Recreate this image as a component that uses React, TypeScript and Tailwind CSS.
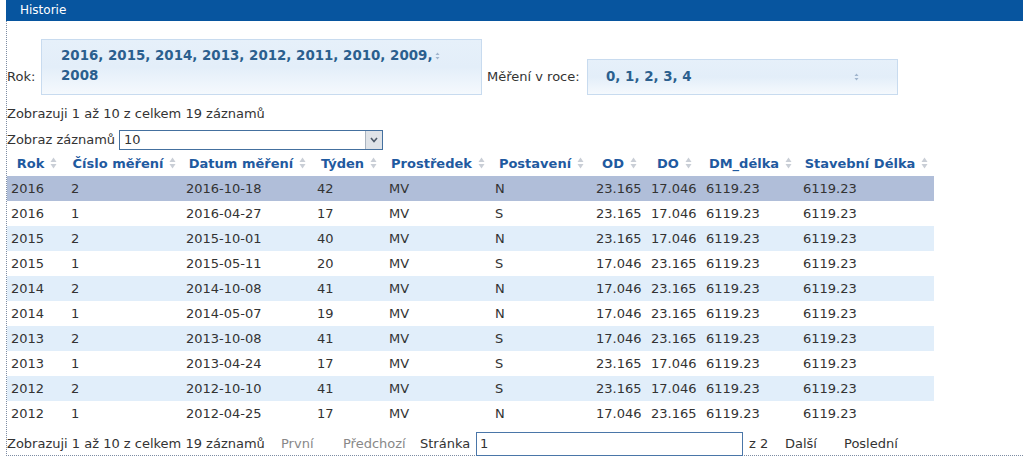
import React from 'react';

type Row = {
  rok: string;
  cislo: string;
  datum: string;
  tyden: string;
  prostredek: string;
  postaveni: string;
  od: string;
  do: string;
  dm: string;
  stavebni: string;
};

const ROWS: Row[] = [
  { rok: '2016', cislo: '2', datum: '2016-10-18', tyden: '42', prostredek: 'MV', postaveni: 'N', od: '23.165', do: '17.046', dm: '6119.23', stavebni: '6119.23' },
  { rok: '2016', cislo: '1', datum: '2016-04-27', tyden: '17', prostredek: 'MV', postaveni: 'S', od: '23.165', do: '17.046', dm: '6119.23', stavebni: '6119.23' },
  { rok: '2015', cislo: '2', datum: '2015-10-01', tyden: '40', prostredek: 'MV', postaveni: 'N', od: '23.165', do: '17.046', dm: '6119.23', stavebni: '6119.23' },
  { rok: '2015', cislo: '1', datum: '2015-05-11', tyden: '20', prostredek: 'MV', postaveni: 'S', od: '17.046', do: '23.165', dm: '6119.23', stavebni: '6119.23' },
  { rok: '2014', cislo: '2', datum: '2014-10-08', tyden: '41', prostredek: 'MV', postaveni: 'N', od: '17.046', do: '23.165', dm: '6119.23', stavebni: '6119.23' },
  { rok: '2014', cislo: '1', datum: '2014-05-07', tyden: '19', prostredek: 'MV', postaveni: 'N', od: '17.046', do: '23.165', dm: '6119.23', stavebni: '6119.23' },
  { rok: '2013', cislo: '2', datum: '2013-10-08', tyden: '41', prostredek: 'MV', postaveni: 'S', od: '17.046', do: '23.165', dm: '6119.23', stavebni: '6119.23' },
  { rok: '2013', cislo: '1', datum: '2013-04-24', tyden: '17', prostredek: 'MV', postaveni: 'S', od: '23.165', do: '17.046', dm: '6119.23', stavebni: '6119.23' },
  { rok: '2012', cislo: '2', datum: '2012-10-10', tyden: '41', prostredek: 'MV', postaveni: 'S', od: '23.165', do: '17.046', dm: '6119.23', stavebni: '6119.23' },
  { rok: '2012', cislo: '1', datum: '2012-04-25', tyden: '17', prostredek: 'MV', postaveni: 'N', od: '17.046', do: '23.165', dm: '6119.23', stavebni: '6119.23' },
];

const COLUMNS: { label: string; width: number; key: keyof Row }[] = [
  { label: 'Rok', width: 60, key: 'rok' },
  { label: 'Číslo měření', width: 115, key: 'cislo' },
  { label: 'Datum měření', width: 131, key: 'datum' },
  { label: 'Týden', width: 72, key: 'tyden' },
  { label: 'Prostředek', width: 106, key: 'prostredek' },
  { label: 'Postavení', width: 101, key: 'postaveni' },
  { label: 'OD', width: 55, key: 'od' },
  { label: 'DO', width: 55, key: 'do' },
  { label: 'DM_délka', width: 97, key: 'dm' },
  { label: 'Stavební Délka', width: 135, key: 'stavebni' },
];

const SortIcon = () => (
  <svg width="7" height="12" viewBox="0 0 7 12" className="inline-block ml-[6px] align-[-1px]">
    <path d="M3.5 0.5 L6.5 5 L0.5 5 Z" fill="#c9ced6" />
    <path d="M3.5 11.5 L6.5 7 L0.5 7 Z" fill="#c9ced6" />
  </svg>
);

const MultiArrow = () => (
  <svg width="5" height="8" viewBox="0 0 5 8">
    <path d="M2.5 0.5 L4.5 3 L0.5 3 Z" fill="#9fb4cc" />
    <path d="M2.5 7.5 L4.5 5 L0.5 5 Z" fill="#9fb4cc" />
  </svg>
);

export default function App() {
  return (
    <div className="w-[1023px] h-[469px] bg-white pl-[6px] font-['DejaVu_Sans',Verdana,sans-serif] text-[13px] text-[#333] overflow-hidden">
      <div className="h-[21px] bg-[#07559f] text-white text-[12px] pl-[14px] leading-[21px]">Historie</div>
      <div className="h-[435px] border-l border-b border-dotted border-[#7d8ca3] flex flex-col">
        {/* filters */}
        <div className="flex items-end mt-[18px]">
          <div className="h-[36px] flex items-center w-[34px]">Rok:</div>
          <div className="w-[441px] h-[56px] border border-[#c8dbef] bg-gradient-to-b from-[#e6f0fa] via-[#e3eef9] to-[#f5f9fd] flex items-start pl-[19px] pt-[6px] font-bold text-[13.4px] leading-[20px] text-[#2b5f8e]">
            <div className="w-[374px] whitespace-nowrap">
              2016, 2015, 2014, 2013, 2012, 2011, 2010, 2009,
              <br />
              2008
            </div>
            <div className="mt-[6px]">
              <MultiArrow />
            </div>
          </div>
          <div className="h-[36px] flex items-center ml-[5px] w-[100px]">Měření v roce:</div>
          <div className="w-[311px] h-[36px] border border-[#c8dbef] bg-gradient-to-b from-[#e6f0fa] via-[#e3eef9] to-[#f5f9fd] flex items-center pl-[18px] font-bold text-[13.4px] text-[#2b5f8e]">
            <div className="w-[248px]">0, 1, 2, 3, 4</div>
            <MultiArrow />
          </div>
        </div>

        <div className="mt-[11px] leading-[16px]">Zobrazuji 1 až 10 z celkem 19 záznamů</div>

        <div className="flex items-center mt-[8px] h-[20px]">
          <span className="w-[112px]">Zobraz záznamů</span>
          <div className="w-[264px] h-[20px] border border-[#44709f] flex items-center bg-white">
            <span className="flex-1 pl-[4px]">10</span>
            <div className="w-[17px] h-full bg-[#dfe3e8] border-l border-[#aab4c0] flex items-center justify-center">
              <svg width="8" height="6" viewBox="0 0 8 6">
                <path d="M1 1 L4 4.5 L7 1" stroke="#4d5a6a" strokeWidth="1.6" fill="none" />
              </svg>
            </div>
          </div>
        </div>

        <table className="table-fixed border-collapse w-[927px] mt-[1px]">
          <colgroup>
            {COLUMNS.map((c) => (
              <col key={c.key} style={{ width: c.width }} />
            ))}
          </colgroup>
          <thead>
            <tr className="h-[25px]">
              {COLUMNS.map((c) => (
                <th key={c.key} className="text-center font-bold text-[#1f5aa0] whitespace-nowrap p-0">
                  {c.label}
                  <SortIcon />
                </th>
              ))}
            </tr>
          </thead>
          <tbody>
            {ROWS.map((r, i) => (
              <tr
                key={i}
                className={
                  i === 0
                    ? 'h-[25px] bg-[#b0bed9]'
                    : i % 2 === 0
                    ? 'h-[25px] bg-[#e1eefa]'
                    : 'h-[25px] bg-white'
                }
              >
                {COLUMNS.map((c) => (
                  <td key={c.key} className="pl-[4px] py-0 whitespace-nowrap">
                    {r[c.key]}
                  </td>
                ))}
              </tr>
            ))}
          </tbody>
        </table>
        <div className="w-[927px] h-[1px] bg-[#333]" />

        <div className="flex items-center mt-[6px] h-[24px] whitespace-nowrap">
          <span className="w-[274px]">Zobrazuji 1 až 10 z celkem 19 záznamů</span>
          <span className="text-[#888] w-[62px]">První</span>
          <span className="text-[#888] w-[77px]">Předchozí</span>
          <span className="w-[56px]">Stránka</span>
          <div className="w-[267px] h-[24px] border border-[#4a76a8] pl-[3px] flex items-center">1</div>
          <span className="ml-[6px] w-[36px]">z 2</span>
          <span className="w-[59px]">Další</span>
          <span>Poslední</span>
        </div>
      </div>
    </div>
  );
}
